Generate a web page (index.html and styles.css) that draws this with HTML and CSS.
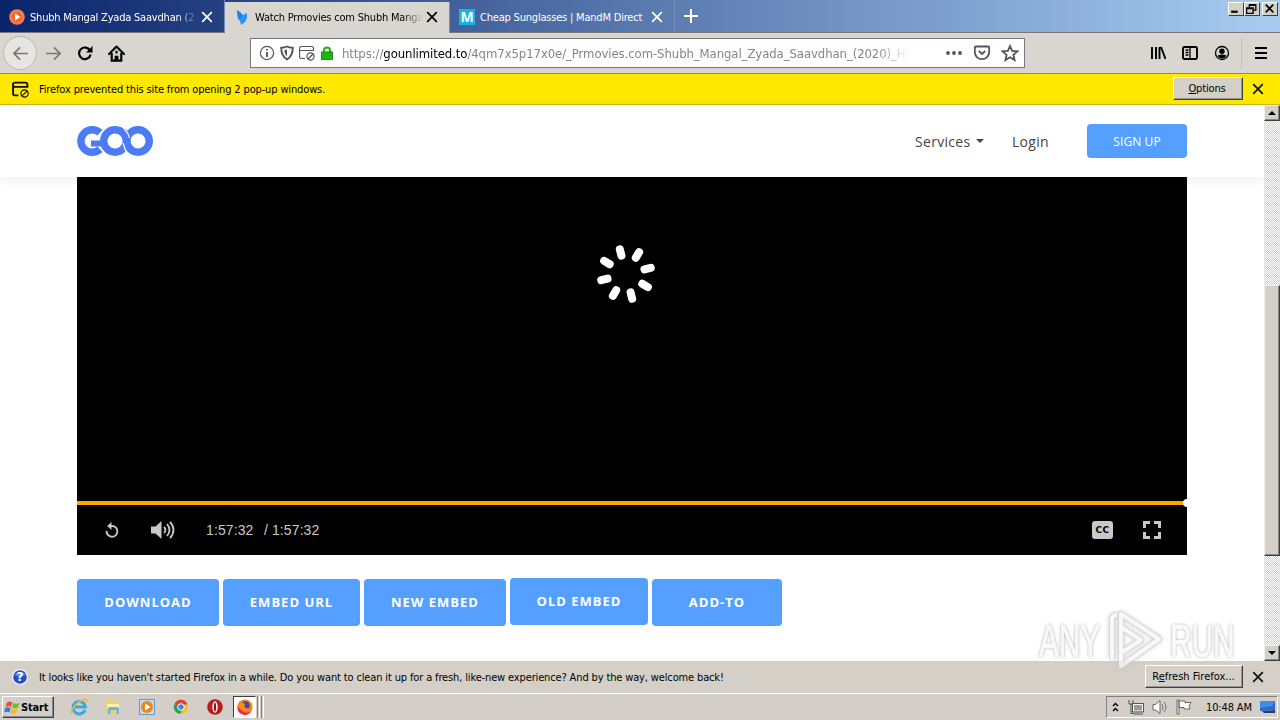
FILE: index.html
```
<!DOCTYPE html>
<html lang="en">
<head>
  <meta charset="UTF-8">
  <meta name="viewport" content="width=device-width, initial-scale=1.0">
  <title>Watch Prmovies com Shubh Mangal Zyada Saavdhan</title>
  <link rel="stylesheet" href="styles.css">
</head>
<body>
  <!-- Tab bar -->
  <header class="tabs">
    <div class="tab">
      <svg class="favicon" viewBox="0 0 16 16"><circle cx="8" cy="8" r="7.8" fill="#f08050"/><circle cx="8" cy="8" r="5" fill="#e8682f"/><path d="M6 4.500v7L11.500 8z" fill="#fff"/></svg>
      <span class="tab-title fade">Shubh Mangal Zyada Saavdhan (2</span>
      <svg class="close" viewBox="0 0 10 10"><path d="M1 1l8 8M9 1L1 9"/></svg>
    </div>
    <div class="tab active">
      <svg class="favicon" viewBox="0 0 16 16"><path d="M3 1l4 3 2 2 4-2v5l-2 4-4 3-1-4-2-2z" fill="#2795f0"/><path d="M3 1l4 3 1 5-4 1z" fill="#1c83e8"/></svg>
      <span class="tab-title fade">Watch Prmovies com Shubh Manga</span>
      <svg class="close" viewBox="0 0 10 10"><path d="M1 1l8 8M9 1L1 9"/></svg>
    </div>
    <div class="tab">
      <span class="favicon m-icon">M</span>
      <span class="tab-title">Cheap Sunglasses | MandM Direct</span>
      <svg class="close" viewBox="0 0 10 10"><path d="M1 1l8 8M9 1L1 9"/></svg>
    </div>
    <svg class="new-tab" viewBox="0 0 14 14"><path d="M7 0v14M0 7h14"/></svg>
    <div class="window-buttons">
      <span class="win-btn"><svg viewBox="0 0 12 10"><path d="M2 8h6" stroke="#000" stroke-width="2"/></svg></span>
      <span class="win-btn"><svg viewBox="0 0 12 10"><path d="M4 4V1.500h6V6.500H8M4 2h6M1.500 4.500h6v5h-6zM1.500 5h6" fill="none" stroke="#000" stroke-width="1.200"/></svg></span>
      <span class="win-btn last"><svg viewBox="0 0 12 10"><path d="M2.500 1.500l7 7M9.500 1.500l-7 7" stroke="#000" stroke-width="1.600"/></svg></span>
    </div>
  </header>

  <!-- Navigation toolbar -->
  <nav class="toolbar">
    <span class="back"><svg viewBox="0 0 18 16"><path d="M17 8H2M8.500 1.500L2 8l6.500 6.500"/></svg></span>
    <svg class="forward" viewBox="0 0 18 16"><path d="M1 8h15M9.500 1.500L16 8l-6.500 6.500"/></svg>
    <svg class="reload" viewBox="0 0 16 16"><path d="M13 5.500A5.800 5.800 0 1 0 13.600 9.500" fill="none" stroke="#000" stroke-width="2.200"/><path d="M15.500 1v6.500H9z"/></svg>
    <svg class="home" viewBox="0 0 16 16"><path d="M1 8.500L8 1.500l7 7" fill="none" stroke="#000" stroke-width="2" stroke-linecap="round" stroke-linejoin="round"/><path d="M3.500 7.500v7.200h9V7.500" fill="none" stroke="#000" stroke-width="2"/><path d="M7 5.500h2V8H7zM6.200 10h3.600v5H6.200z"/></svg>
    <div class="urlbar">
      <svg class="info" viewBox="0 0 16 16"><circle cx="8" cy="8" r="6.600"/><path d="M8 7v5M8 4v1.500" stroke-width="1.800"/></svg>
      <svg viewBox="0 0 16 16"><path d="M8 1.500c2 1 4 1.200 5.800 1.300 0 6-1.500 9.200-5.800 11.700C3.700 12 2.200 8.800 2.200 2.800 4 2.700 6 2.500 8 1.500z" stroke-width="1.900"/><path d="M8 4.500v7C6 9.500 5.500 8 5.400 5.300z" fill="#555" stroke="none"/></svg>
      <svg class="popup-icon" viewBox="0 0 16 16"><path d="M6 13.500H2.500a2 2 0 0 1-2-2v-8a2 2 0 0 1 2-2h10a2 2 0 0 1 2 2V6M.5 5.500h14"/><circle cx="11.500" cy="11.500" r="3.600"/><path d="M9 14l5-5"/></svg>
      <svg class="lock" viewBox="0 0 12 14"><path d="M3 7V4.500a3 3 0 0 1 6 0V7" fill="none" stroke="#12bc00" stroke-width="2"/><rect x="0" y="6" width="12" height="8" rx="1" fill="#12bc00"/></svg>
      <span class="url">https://<b>gounlimited.to</b>/4qm7x5p17x0e/_Prmovies.com-Shubh_Mangal_Zyada_Saavdhan_(2020)_Hi</span>
      <svg class="dots" viewBox="0 0 16 4"><circle cx="2" cy="2" r="1.900"/><circle cx="8" cy="2" r="1.900"/><circle cx="14" cy="2" r="1.900"/></svg>
      <svg viewBox="0 0 16 16"><path d="M2 1.500h12a1.200 1.200 0 0 1 1.200 1.200V7A7.200 7.200 0 0 1 .8 7V2.700A1.200 1.200 0 0 1 2 1.500zM4.800 6L8 9l3.200-3" stroke-width="1.800"/></svg>
      <svg class="star" viewBox="0 0 16 16"><path d="M8 1.800l1.900 4.300 4.700.4-3.600 3.100 1.100 4.700L8 11.800l-4.100 2.500L5 9.600 1.400 6.500l4.700-.4z" stroke-width="1.600"/></svg>
    </div>
    <div class="tools">
      <svg viewBox="0 0 16 16"><path d="M2 2v12M6 2v12M9.500 2v12M11 2l4.500 12" fill="none" stroke="#000" stroke-width="1.900"/></svg>
      <svg viewBox="0 0 16 16"><rect x="1" y="2" width="14" height="12" rx="1.500" fill="none" stroke="#000" stroke-width="1.900"/><path d="M8 2v12M3.500 5h3M3.500 7.500h3M3.500 10h3" stroke="#000" stroke-width="1.300"/></svg>
      <svg viewBox="0 0 16 16"><circle cx="8" cy="8" r="6.500" fill="none" stroke="#000" stroke-width="1.300"/><circle cx="8" cy="6.300" r="2.700"/><path d="M3.500 10.500Q8 8.500 12.500 10.500 11 13.500 8 13.500T3.500 10.500"/></svg>
      <span class="divider"></span>
      <svg class="menu" viewBox="0 0 14 14"><path d="M1 2h12M1 7h12M1 12h12" stroke="#000" stroke-width="1.900"/></svg>
    </div>
  </nav>

  <!-- Popup notification -->
  <div class="notice popup-notice">
    <svg class="popup-icon" viewBox="0 0 16 16"><path d="M6 13.500H2.500a1.500 1.500 0 0 1-1.500-1.500v-9a1.500 1.500 0 0 1 1.500-1.500h10a2 2 0 0 1 2 2V6M1 5.500h14" stroke-width="1.800"/><circle cx="11.800" cy="11.800" r="3.400"/><path d="M9.500 14l4.500-4.500"/></svg>
    <span class="notice-text">Firefox prevented this site from opening 2 pop-up windows.</span>
    <span class="classic-btn options"><u>O</u>ptions</span>
    <svg class="close" viewBox="0 0 10 10"><path d="M1 1l8 8M9 1L1 9"/></svg>
  </div>

  <!-- Page -->
  <main class="viewport">
    <div class="page">
      <div class="site-header">
        <svg class="logo" viewBox="0 0 76 30">
          <!-- G -->
          <path d="M23 6.800A11.300 11.300 0 1 0 23 23.200" fill="none" stroke="#4b7bf5" stroke-width="7.400"/>
          <path d="M14 14.500h11v6H14z" fill="#4b7bf5"/>
          <!-- right ring, then the middle ring over it -->
          <circle cx="61" cy="15" r="11.300" fill="none" stroke="#4b7bf5" stroke-width="7.400"/>
          <path d="M38 0a15.600 15.600 0 0 0 0 30l8-1 6-14-5-12z" fill="#fff"/>
          <circle cx="38" cy="15" r="11.300" fill="none" stroke="#4b7bf5" stroke-width="7.400"/>
          <path d="M46 5q3.500 4 4 10t5 9" fill="none" stroke="#4b7bf5" stroke-width="7"/>
          <path d="M47 3q4.500 4 5.500 9M46 17q1.500 7 5.500 12" fill="none" stroke="#fff" stroke-width="1.200"/>
        </svg>
        <div class="site-menu">
          <span class="services">Services</span>
          <span class="caret"></span>
          <span class="login">Login</span>
          <a class="signup">SIGN UP</a>
        </div>
      </div>

      <div class="player">
        <div class="screen">
          <svg class="spinner" viewBox="-30 -30 60 60">
            <g stroke="#fff" stroke-width="8" stroke-linecap="round" transform="rotate(-14)">
              <path d="M0-25.500v6.500"/>
              <path d="M0-25.500v6.500" transform="rotate(45)"/>
              <path d="M0-25.500v6.500" transform="rotate(90)"/>
              <path d="M0-25.500v6.500" transform="rotate(135)"/>
              <path d="M0-25.500v6.500" transform="rotate(180)"/>
              <path d="M0-25.500v6.500" transform="rotate(225)"/>
              <path d="M0-25.500v6.500" transform="rotate(270)"/>
              <path d="M0-25.500v6.500" transform="rotate(315)"/>
            </g>
          </svg>
        </div>
        <div class="progress"><span class="knob"></span></div>
        <div class="controls">
          <svg class="replay" viewBox="0 0 14 16"><path d="M1.600 9A5.400 5.400 0 1 0 7 4H5" fill="none" stroke="#c8c8c8" stroke-width="1.900"/><path d="M6.500 0v8L2.200 4z" fill="#c8c8c8"/></svg>
          <svg class="volume" viewBox="0 0 24 18"><path d="M0 5.500h4.500L10.500 0v18l-6-5.500H0z" fill="#c8c8c8"/><path d="M13 6q3 3 0 6M16 3q5 6 0 12M19 .8q7 8.200 0 16.400" fill="none" stroke="#c8c8c8" stroke-width="1.800"/></svg>
          <span class="time">1:57:32</span>
          <span class="time total">/ 1:57:32</span>
          <span class="cc">CC</span>
          <svg class="fullscreen" viewBox="0 0 18 18"><path d="M1.500 7V1.500H7M11 1.500h5.500V7M16.500 11v5.500H11M7 16.500H1.500V11" fill="none" stroke="#c8c8c8" stroke-width="3"/></svg>
        </div>
      </div>

      <div class="actions">
        <a class="btn download">DOWNLOAD</a>
        <a class="btn embed-url">EMBED URL</a>
        <a class="btn new-embed">NEW EMBED</a>
        <a class="btn old-embed">OLD EMBED</a>
        <a class="btn add-to">ADD-TO</a>
      </div>
    </div>
    <div class="scrollbar">
      <span class="scroll-btn"><i class="arrow-up"></i></span>
      <span class="thumb"></span>
      <span class="scroll-btn bottom"><i class="arrow-down"></i></span>
    </div>
  </main>

  <!-- Refresh notification -->
  <div class="notice refresh-notice">
    <svg class="help" viewBox="0 0 16 16"><circle cx="8" cy="8" r="7.400" fill="#2450b8" stroke="#eef3ff" stroke-width="1.200"/><path d="M2.500 6a6 5 0 0 1 11 0Q8 9 2.500 6" fill="#5d8be0"/><text x="8" y="12.200" class="help-mark">?</text></svg>
    <span class="notice-text">It looks like you haven't started Firefox in a while. Do you want to clean it up for a fresh, like-new experience? And by the way, welcome back!</span>
    <span class="classic-btn refresh">R<u>e</u>fresh Firefox...</span>
    <svg class="close" viewBox="0 0 10 10"><path d="M1 1l8 8M9 1L1 9"/></svg>
  </div>

  <!-- Taskbar -->
  <footer class="taskbar">
    <span class="start">
      <svg viewBox="0 0 16 14"><path d="M3 2q3-2 5.500 0L7 6.500Q4.500 5 1.500 6.500z" fill="#e8532b"/><path d="M9.500 2.500Q12 4 15.500 2.500L14 7q-3 1.500-6 0z" fill="#76b82a"/><path d="M1.200 7.500Q4 6 6.700 7.500L5.500 12Q3 10.500 0 12z" fill="#3480d8"/><path d="M7.800 8q3 1.500 6 0l-1.300 4.500q-3 1.500-6 0z" fill="#f7b91a"/></svg>
      Start
    </span>
    <div class="launch">
      <svg viewBox="0 0 18 18"><path d="M15 12a6.200 6.200 0 1 1 .4-3H5" fill="none" stroke="#38a8e4" stroke-width="3"/><path d="M2 15.500C-2 16 6 3 15 1q3 0 1 4" fill="none" stroke="#efb735" stroke-width="1.500"/></svg>
      <svg viewBox="0 0 18 18"><path d="M2 4l1-2h5l1 2h6v11H2z" fill="#efcf68"/><path d="M3 6h12v5H3z" fill="#fff2ad"/><path d="M4 16v-5q0-2 2-2h7q2 0 2 2v5h-2.500v-4h-6v4z" fill="#63b9df"/></svg>
      <svg viewBox="0 0 18 18"><rect x="1.500" y="1.500" width="15" height="15" fill="#bcdcf5" stroke="#5e9cd1"/><circle cx="9" cy="9" r="6" fill="#f08519"/><path d="M7 5.500v7L12.500 9z" fill="#fff"/></svg>
      <svg viewBox="0 0 18 18"><circle cx="9" cy="9" r="7" fill="#f3c622"/><path d="M2.500 6A7 7 0 0 1 15.500 6.500H9L6 10z" fill="#dc4437"/><path d="M2.500 6A7 7 0 0 0 8 16l3-5-5-1z" fill="#28a15a"/><circle cx="9" cy="9" r="3.300" fill="#4285e8" stroke="#fff"/></svg>
      <svg viewBox="0 0 18 18"><circle cx="9" cy="9" r="7.800" fill="#b81c1c"/><ellipse cx="9" cy="9" rx="2.700" ry="5.700" fill="#fff"/><ellipse cx="9" cy="9" rx="1.100" ry="4.600" fill="#911"/></svg>
    </div>
    <span class="task-active">
      <svg viewBox="0 0 18 18"><circle cx="9" cy="9" r="7.500" fill="#ff7b19"/><path d="M8 1.500A7.500 7.500 0 0 1 16.500 8Q17 5 13 2z" fill="#ffd332"/><path d="M1.500 8A7.500 7.500 0 0 0 15.500 13Q10 17 5 12z" fill="#ea2b48"/><circle cx="9.500" cy="7.500" r="4.300" fill="#3551b0"/><path d="M1.500 7l2-4q2 2 6 3-2 2-1 3 2 2 5 1-3 4-7 2-5-2-5-5" fill="#ff8a18"/></svg>
    </span>
    <span class="grip"></span>
    <span class="grip"></span>
    <div class="tray">
      <svg class="chevron" viewBox="0 0 7 10"><path d="M1 4l2.500-2.500L6 4M1 9l2.500-2.500L6 9" fill="none" stroke="#000" stroke-width="1.400"/></svg>
      <svg class="network" viewBox="0 0 16 16"><rect x="5" y="4.500" width="10" height="8" fill="#999"/><path d="M5.500 5.500h9v6.500h-9z" fill="none" stroke="#fff"/><path d="M4.500 4.500h11v8.500h-11zM6 15h9M1 1v4h4V1M3 5v9.500h3" fill="none" stroke="#555"/></svg>
      <svg class="sound" viewBox="0 0 16 16"><path d="M1 5.500h2.500L8 1.500v13L3.500 11H1z" fill="#fff" stroke="#666"/><path d="M10 5q2 3 0 6M12 3q4 5 0 10" fill="none" stroke="#777"/></svg>
      <svg class="flag" viewBox="0 0 16 16"><path d="M1 1h2v14H1zM3 2h6v1.500h6L13 7l1 3H8V8.500H3z" fill="#fff" stroke="#666"/></svg>
      <span class="clock">10:48 AM</span>
      <svg class="desktop" viewBox="0 0 16 14"><path d="M0 1.500L15 1v9L0 11z" fill="#2b6bd1"/><path d="M0 1.500L15 1l-3 5L0 8z" fill="#458be8"/><path d="M2 11l13-1v3H4z" fill="#1d3f76"/></svg>
    </div>
  </footer>

  <!-- Recording watermark -->
  <div class="watermark">
    <span>ANY</span>
    <svg viewBox="0 0 58 64"><path d="M5 50V10q0-4 5-4M14 42V5l38 25-38 27V44l20-13-20-13" fill="none" stroke="#ccc" stroke-width="6" stroke-linejoin="round"/><path d="M5 50V10q0-4 5-4M14 42V5l38 25-38 27V44l20-13-20-13" fill="none" stroke="#f6f6f6" stroke-width="4" stroke-linejoin="round"/></svg>
    <span>RUN</span>
  </div>
</body>
</html>
```
FILE: styles.css
```
/* General Styles */
* {
  box-sizing: border-box;
}

body {
  margin: 0;
  width: 1280px;
  height: 720px;
  overflow: hidden;
  display: flex;
  flex-direction: column;
  position: relative;
  font-family: 'DejaVu Sans Condensed', 'DejaVu Sans', sans-serif;
  font-size: 11px;
  letter-spacing: -0.14px;
  color: #000;
  background-color: #fff;
}

svg,
span {
  flex-shrink: 0;
}

.close {
  width: 12px;
  height: 12px;
  fill: none;
  stroke: #111;
  stroke-width: 1.4;
}

/* Tabs */
.tabs {
  height: 33px;
  display: flex;
  border-bottom: 1px solid #777;
  background: linear-gradient(to right, #0a246a 0, #a6caf0 1264px);
}

.tab {
  width: 225px;
  display: flex;
  align-items: center;
  padding: 2px 11px 0 9px;
  border-right: 1px solid #7a8dbb;
  color: #fff;
}

.tab .close {
  margin-left: auto;
  stroke: #fff;
}

.tab.active {
  height: 31px;
  margin-top: 2px;
  padding-top: 0;
  padding-bottom: 1px;
  background-color: #d9d6d1;
  box-shadow: 0 1px #d9d6d1;
  color: #000;
}

.tab.active .close {
  stroke: #000;
}

.favicon {
  width: 16px;
  height: 16px;
  margin-right: 5px;
}

.m-icon {
  background-color: #16b4e8;
  font: bold 14px/16px 'Open Sans', sans-serif;
  text-align: center;
}

.tab-title {
  width: 168px;
  white-space: nowrap;
  letter-spacing: -0.2px;
}

.fade {
  -webkit-mask-image: linear-gradient(to right, #000 88%, transparent);
  mask-image: linear-gradient(to right, #000 88%, transparent);
}

.new-tab {
  width: 14px;
  height: 14px;
  margin: 9px 0 0 9px;
  stroke: #fff;
  stroke-width: 2;
}

.window-buttons {
  display: flex;
  margin: 2px 2px 0 auto;
}

.win-btn {
  width: 16px;
  height: 14px;
  background-color: #d4d0c8;
  border: 1px solid;
  border-color: #fff #404040 #404040 #fff;
}

.win-btn.last {
  margin-left: 2px;
}

.win-btn svg {
  display: block;
  width: 13px;
  height: 11px;
}

/* Toolbar */
.toolbar {
  height: 41px;
  display: flex;
  align-items: center;
  background-color: #d9d6d1;
  border-bottom: 1px solid #8b8780;
  padding-left: 3px;
}

.back {
  width: 34px;
  height: 34px;
  display: flex;
  align-items: center;
  justify-content: center;
  border: 1px solid #bab7b2;
  border-radius: 50%;
  background-color: #e7e5e2;
}

.back svg,
.forward {
  width: 17px;
  height: 15px;
  fill: none;
  stroke: #777;
  stroke-width: 1.8;
}

.forward {
  margin-left: 8px;
}

.reload {
  width: 16px;
  height: 16px;
  margin-left: 15px;
}

.home {
  width: 17px;
  height: 17px;
  margin-left: 15px;
}

.urlbar {
  width: 775px;
  height: 30px;
  margin-left: 125px;
  padding: 0 6px 0 8px;
  display: flex;
  align-items: center;
  background-color: #fff;
  border: 1px solid #777;
}

.urlbar svg {
  width: 16px;
  height: 16px;
  margin-right: 4px;
  fill: none;
  stroke: #555;
  stroke-width: 1.2;
}

.urlbar .lock {
  width: 12px;
  height: 14px;
  margin: 0 9px 0 2px;
}

.url {
  width: 568px;
  padding-top: 1px;
  white-space: nowrap;
  font-size: 13px;
  line-height: 18px;
  letter-spacing: -0.08px;
  color: #858585;
  -webkit-mask-image: linear-gradient(to right, #000 94%, transparent);
  mask-image: linear-gradient(to right, #000 94%, transparent);
}

.url b {
  color: #000;
  font-weight: normal;
}

.urlbar .dots {
  height: 4px;
  margin: 0 12px 0 36px;
  fill: #555;
  stroke: none;
}

.urlbar .star {
  width: 18px;
  height: 18px;
  margin: 0 0 0 7px;
}

.tools {
  display: flex;
  align-items: center;
  gap: 16px;
  margin-left: 125px;
}

.tools svg {
  width: 16px;
  height: 16px;
}

.divider {
  width: 1px;
  height: 31px;
  margin: 0 -4px 0 -5px;
  background-color: #c3c0bb;
}

.tools .menu {
  width: 14px;
  height: 14px;
}

/* Notifications */
.notice {
  display: flex;
  align-items: center;
  padding-right: 16px;
}

.popup-notice {
  height: 31px;
  padding-left: 12px;
  background-color: #ffe900;
  border-bottom: 1px solid #c9b919;
}

.notice .popup-icon {
  width: 17px;
  height: 17px;
  margin-right: 10px;
  fill: none;
  stroke: #111;
  stroke-width: 1.1;
}

.notice-text {
  white-space: nowrap;
}

.classic-btn {
  height: 23px;
  margin: 0 9px 0 auto;
  background-color: #d4d0c8;
  border: 1px solid;
  border-color: #fff #404040 #404040 #fff;
  box-shadow: inset -1px -1px #999;
  line-height: 21px;
  text-align: center;
  white-space: nowrap;
}

.options {
  width: 70px;
  margin-top: -2px;
  padding-right: 2px;
}

.refresh-notice {
  height: 32px;
  padding-left: 12px;
  background-color: #d4d0c8;
}

.refresh {
  width: 98px;
  margin-top: -2px;
  padding-right: 1px;
  letter-spacing: 0;
}

.help {
  width: 16px;
  height: 16px;
  margin-right: 11px;
}

.help-mark {
  fill: #fff;
  font: bold 12px 'DejaVu Sans', sans-serif;
  text-anchor: middle;
}

/* Page content */
.viewport {
  height: 556px;
  display: flex;
}

.page {
  width: 1264px;
  letter-spacing: 0;
}

.site-header {
  height: 72px;
  padding: 0 77px;
  display: flex;
  align-items: center;
  background-color: #fff;
  box-shadow: 0 3px 12px rgba(0, 0, 0, 0.07);
}

.logo {
  width: 76px;
  height: 30px;
}

.site-menu {
  display: flex;
  align-items: center;
  margin-left: auto;
  font-family: 'Open Sans', sans-serif;
  font-size: 14px;
  letter-spacing: 0.3px;
  color: #444;
}

.services {
  width: 56px;
}

.caret {
  margin-left: 5px;
  border: 4px solid transparent;
  border-top-color: #444;
  border-bottom: 0;
}

.login {
  width: 38px;
  margin: 0 37px 0 28px;
}

.signup {
  width: 100px;
  height: 34px;
  border-radius: 4px;
  background-color: #549fff;
  color: #fff;
  font-size: 12px;
  letter-spacing: 0.1px;
  line-height: 35px;
  text-align: center;
}

.player {
  width: 1110px;
  height: 378px;
  margin-left: 77px;
  position: relative;
  background-color: #000;
}

.screen {
  height: 324px;
  padding: 67px 0 0 519px;
}

.spinner {
  width: 60px;
  height: 60px;
}

.progress {
  height: 4px;
  display: flex;
  align-items: center;
  justify-content: flex-end;
  background-color: #ffa500;
}

.knob {
  width: 4px;
  height: 8px;
  border-radius: 4px 0 0 4px;
  background-color: #fff;
}

.controls {
  height: 50px;
  display: flex;
  align-items: center;
  padding: 0 26px 0 28px;
  color: #c8c8c8;
}

.replay {
  width: 14px;
  height: 16px;
}

.volume {
  width: 24px;
  height: 18px;
  margin: 0 31px 0 32px;
}

.time {
  width: 49px;
  font: 14px 'Liberation Sans', sans-serif;
  letter-spacing: 0.1px;
}

.total {
  width: 57px;
  margin-left: 9px;
  white-space: nowrap;
}

.cc {
  width: 21px;
  height: 18px;
  margin-left: auto;
  border-radius: 3px;
  background-color: #c8c8c8;
  color: #000;
  font: bold 9px/18px 'DejaVu Sans', sans-serif;
  letter-spacing: 0.5px;
  text-align: center;
}

.fullscreen {
  width: 18px;
  height: 18px;
  margin-left: 30px;
}

.actions {
  display: flex;
  gap: 4px;
  margin: 24px 0 0 77px;
}

.btn {
  height: 47px;
  border-radius: 4px;
  background-color: #549fff;
  color: #fff;
  font: bold 13px/47px 'Open Sans', sans-serif;
  letter-spacing: 1px;
  text-align: center;
}

.download,
.new-embed {
  width: 142px;
}

.embed-url {
  width: 137px;
}

.old-embed {
  width: 138px;
  margin-top: -1px;
}

.add-to {
  width: 130px;
}

/* Scrollbar */
.scrollbar {
  width: 16px;
  display: flex;
  flex-direction: column;
  background: repeating-conic-gradient(#fff 0 25%, #d4d0c8 0 50%) 0 0 / 2px 2px;
}

.scroll-btn,
.thumb {
  background-color: #d4d0c8;
  border: 1px solid;
  border-color: #eee #404040 #404040 #eee;
  box-shadow: inset -1px -1px #888;
}

.scroll-btn {
  height: 16px;
  display: flex;
  align-items: center;
  justify-content: center;
}

.bottom {
  margin-top: auto;
}

.arrow-up,
.arrow-down {
  border: 4px solid transparent;
}

.arrow-up {
  border-top: 0;
  border-bottom-color: #000;
}

.arrow-down {
  border-bottom: 0;
  border-top-color: #000;
}

.thumb {
  height: 271px;
  margin-top: 164px;
}

/* Taskbar */
.taskbar {
  height: 27px;
  display: flex;
  align-items: center;
  padding: 1px 2px;
  background-color: #d4cec8;
  border-top: 1px solid #fff;
}

.start {
  width: 52px;
  height: 22px;
  display: flex;
  align-items: center;
  gap: 1px;
  padding-left: 1px;
  border: 1px solid;
  border-color: #fff #404040 #404040 #fff;
  box-shadow: inset -1px -1px #888;
  font-weight: bold;
}

.start svg {
  width: 16px;
  height: 15px;
}

.launch {
  display: flex;
  gap: 16px;
  margin-left: 16px;
}

.launch svg,
.task-active svg {
  width: 18px;
  height: 18px;
}

.task-active {
  width: 23px;
  height: 22px;
  padding: 1px 2px;
  margin-left: 9px;
  background-color: #fff;
  border: 1px solid;
  border-color: #404040 #fff #fff #404040;
}

.grip {
  width: 3px;
  height: 22px;
  margin-left: 1px;
  border-right: 1px solid #fff;
  border-left: 1px solid #808080;
}

.tray {
  width: 172px;
  height: 22px;
  margin-left: auto;
  padding-left: 5px;
  display: flex;
  align-items: center;
  border: 1px solid;
  border-color: #808080 #fff #fff #808080;
}

.tray svg {
  width: 16px;
  height: 16px;
}

.tray .chevron {
  width: 7px;
  height: 10px;
}

.network {
  margin-left: 9px;
}

.sound,
.flag {
  margin-left: 8px;
}

.clock {
  width: 47px;
  margin: 0 7px 0 14px;
  white-space: nowrap;
}

/* Watermark */
.watermark {
  position: absolute;
  left: 1039px;
  top: 609px;
  display: flex;
  align-items: center;
  opacity: 0.75;
  font: 46px/64px 'Liberation Sans', sans-serif;
  color: #f8f8f8;
  -webkit-text-stroke: 1px #f8f8f8;
  text-shadow: 0 0 3px #999, 0 0 4px #aaa;
}

.watermark span {
  width: 63px;
  transform: scaleX(0.65);
  transform-origin: left;
}

.watermark svg {
  width: 58px;
  height: 64px;
  margin: 0 5px 0 5px;
  filter: drop-shadow(0 0 2px #bbb);
}
```
